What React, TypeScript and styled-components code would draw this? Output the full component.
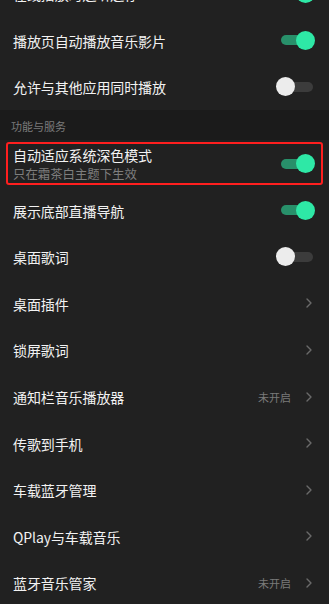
import React from "react";
import styled, { createGlobalStyle } from "styled-components";

const GlobalStyle = createGlobalStyle`
  html, body {
    margin: 0;
    padding: 0;
    background: #212121;
  }
  body {
    font-family: "Noto Sans CJK SC", "Noto Sans", sans-serif;
    -webkit-font-smoothing: antialiased;
  }
`;

type Item = {
  title: string;
  sub?: string;
  kind: "on" | "off" | "link";
  value?: string;
  highlight?: boolean;
};

const GROUP_ONE: Item[] = [
  { title: "在线播放时边听边存", kind: "on" },
  { title: "播放页自动播放音乐影片", kind: "on" },
  { title: "允许与其他应用同时播放", kind: "off" },
];

const GROUP_TWO: Item[] = [
  { title: "自动适应系统深色模式", sub: "只在霜茶白主题下生效", kind: "on", highlight: true },
  { title: "展示底部直播导航", kind: "on" },
  { title: "桌面歌词", kind: "off" },
  { title: "桌面插件", kind: "link" },
  { title: "锁屏歌词", kind: "link" },
  { title: "通知栏音乐播放器", kind: "link", value: "未开启" },
  { title: "传歌到手机", kind: "link" },
  { title: "车载蓝牙管理", kind: "link" },
  { title: "QPlay与车载音乐", kind: "link" },
  { title: "蓝牙音乐管家", kind: "link", value: "未开启" },
];

export default function App() {
  return (
    <Page>
      <GlobalStyle />
      <Group $offset={-29.5}>
        {GROUP_ONE.map((item) => (
          <SettingRow key={item.title} item={item} />
        ))}
      </Group>
      <SectionHeader>功能与服务</SectionHeader>
      <Group $offset={0}>
        {GROUP_TWO.map((item) => (
          <SettingRow key={item.title} item={item} />
        ))}
      </Group>
    </Page>
  );
}

function SettingRow({ item }: { item: Item }) {
  return (
    <Row $highlight={!!item.highlight}>
      <Texts>
        <Title>{item.title}</Title>
        {item.sub ? <Sub>{item.sub}</Sub> : null}
      </Texts>
      {item.kind === "link" ? (
        <Trailing>
          {item.value ? <Value>{item.value}</Value> : null}
          <Chevron viewBox="0 0 6 10">
            <path d="M1 1 L5 5 L1 9" fill="none" stroke="#6a6a6a" strokeWidth="1.4" strokeLinecap="round" strokeLinejoin="round" />
          </Chevron>
        </Trailing>
      ) : (
        <Switch $on={item.kind === "on"}>
          <Knob $on={item.kind === "on"} />
        </Switch>
      )}
    </Row>
  );
}

const Page = styled.div`
  width: 329px;
  height: 604px;
  overflow: hidden;
  background: #212121;
  display: flex;
  flex-direction: column;
`;

const Group = styled.div<{ $offset: number }>`
  display: flex;
  flex-direction: column;
  margin-top: ${(p) => p.$offset}px;
  flex-shrink: 0;
`;

const SectionHeader = styled.div`
  height: 30px;
  flex-shrink: 0;
  background: #1b1b1b;
  color: #7c7c7c;
  font-size: 11px;
  display: flex;
  align-items: center;
  padding-left: 11px;
  padding-top: 1px;
  box-sizing: border-box;
`;

const Row = styled.div<{ $highlight: boolean }>`
  height: 46.6px;
  flex-shrink: 0;
  box-sizing: border-box;
  display: flex;
  align-items: center;
  justify-content: space-between;
  padding: 0 14px 0 13px;
  position: relative;
  &::after {
    content: "";
    display: ${(p) => (p.$highlight ? "block" : "none")};
    position: absolute;
    left: 6px;
    right: 6px;
    top: 2px;
    bottom: 2px;
    border: 2px solid #ff1f1f;
    border-radius: 3px;
  }
`;

const Texts = styled.div`
  display: flex;
  flex-direction: column;
  gap: 4px;
  padding-top: 1px;
`;

const Title = styled.div`
  color: #f2f2f2;
  font-size: 14px;
  line-height: 16px;
  letter-spacing: -0.1px;
`;

const Sub = styled.div`
  color: #7e7e7e;
  font-size: 12.4px;
  line-height: 14px;
`;

const Trailing = styled.div`
  display: flex;
  align-items: center;
  gap: 15px;
  padding-right: 3px;
`;

const Value = styled.span`
  color: #7a7a7a;
  font-size: 11px;
`;

const Chevron = styled.svg`
  width: 6px;
  height: 10px;
`;

const Switch = styled.div<{ $on: boolean }>`
  width: 32px;
  height: 10px;
  border-radius: 5px;
  background: ${(p) => (p.$on ? "#28906a" : "#3c3c3c")};
  position: relative;
  margin-right: 2px;
`;

const Knob = styled.div<{ $on: boolean }>`
  position: absolute;
  top: -4.5px;
  ${(p) => (p.$on ? "right: -2px;" : "left: -5px;")}
  width: 19px;
  height: 19px;
  border-radius: 50%;
  background: ${(p) => (p.$on ? "#2ee8a6" : "#ececec")};
`;
